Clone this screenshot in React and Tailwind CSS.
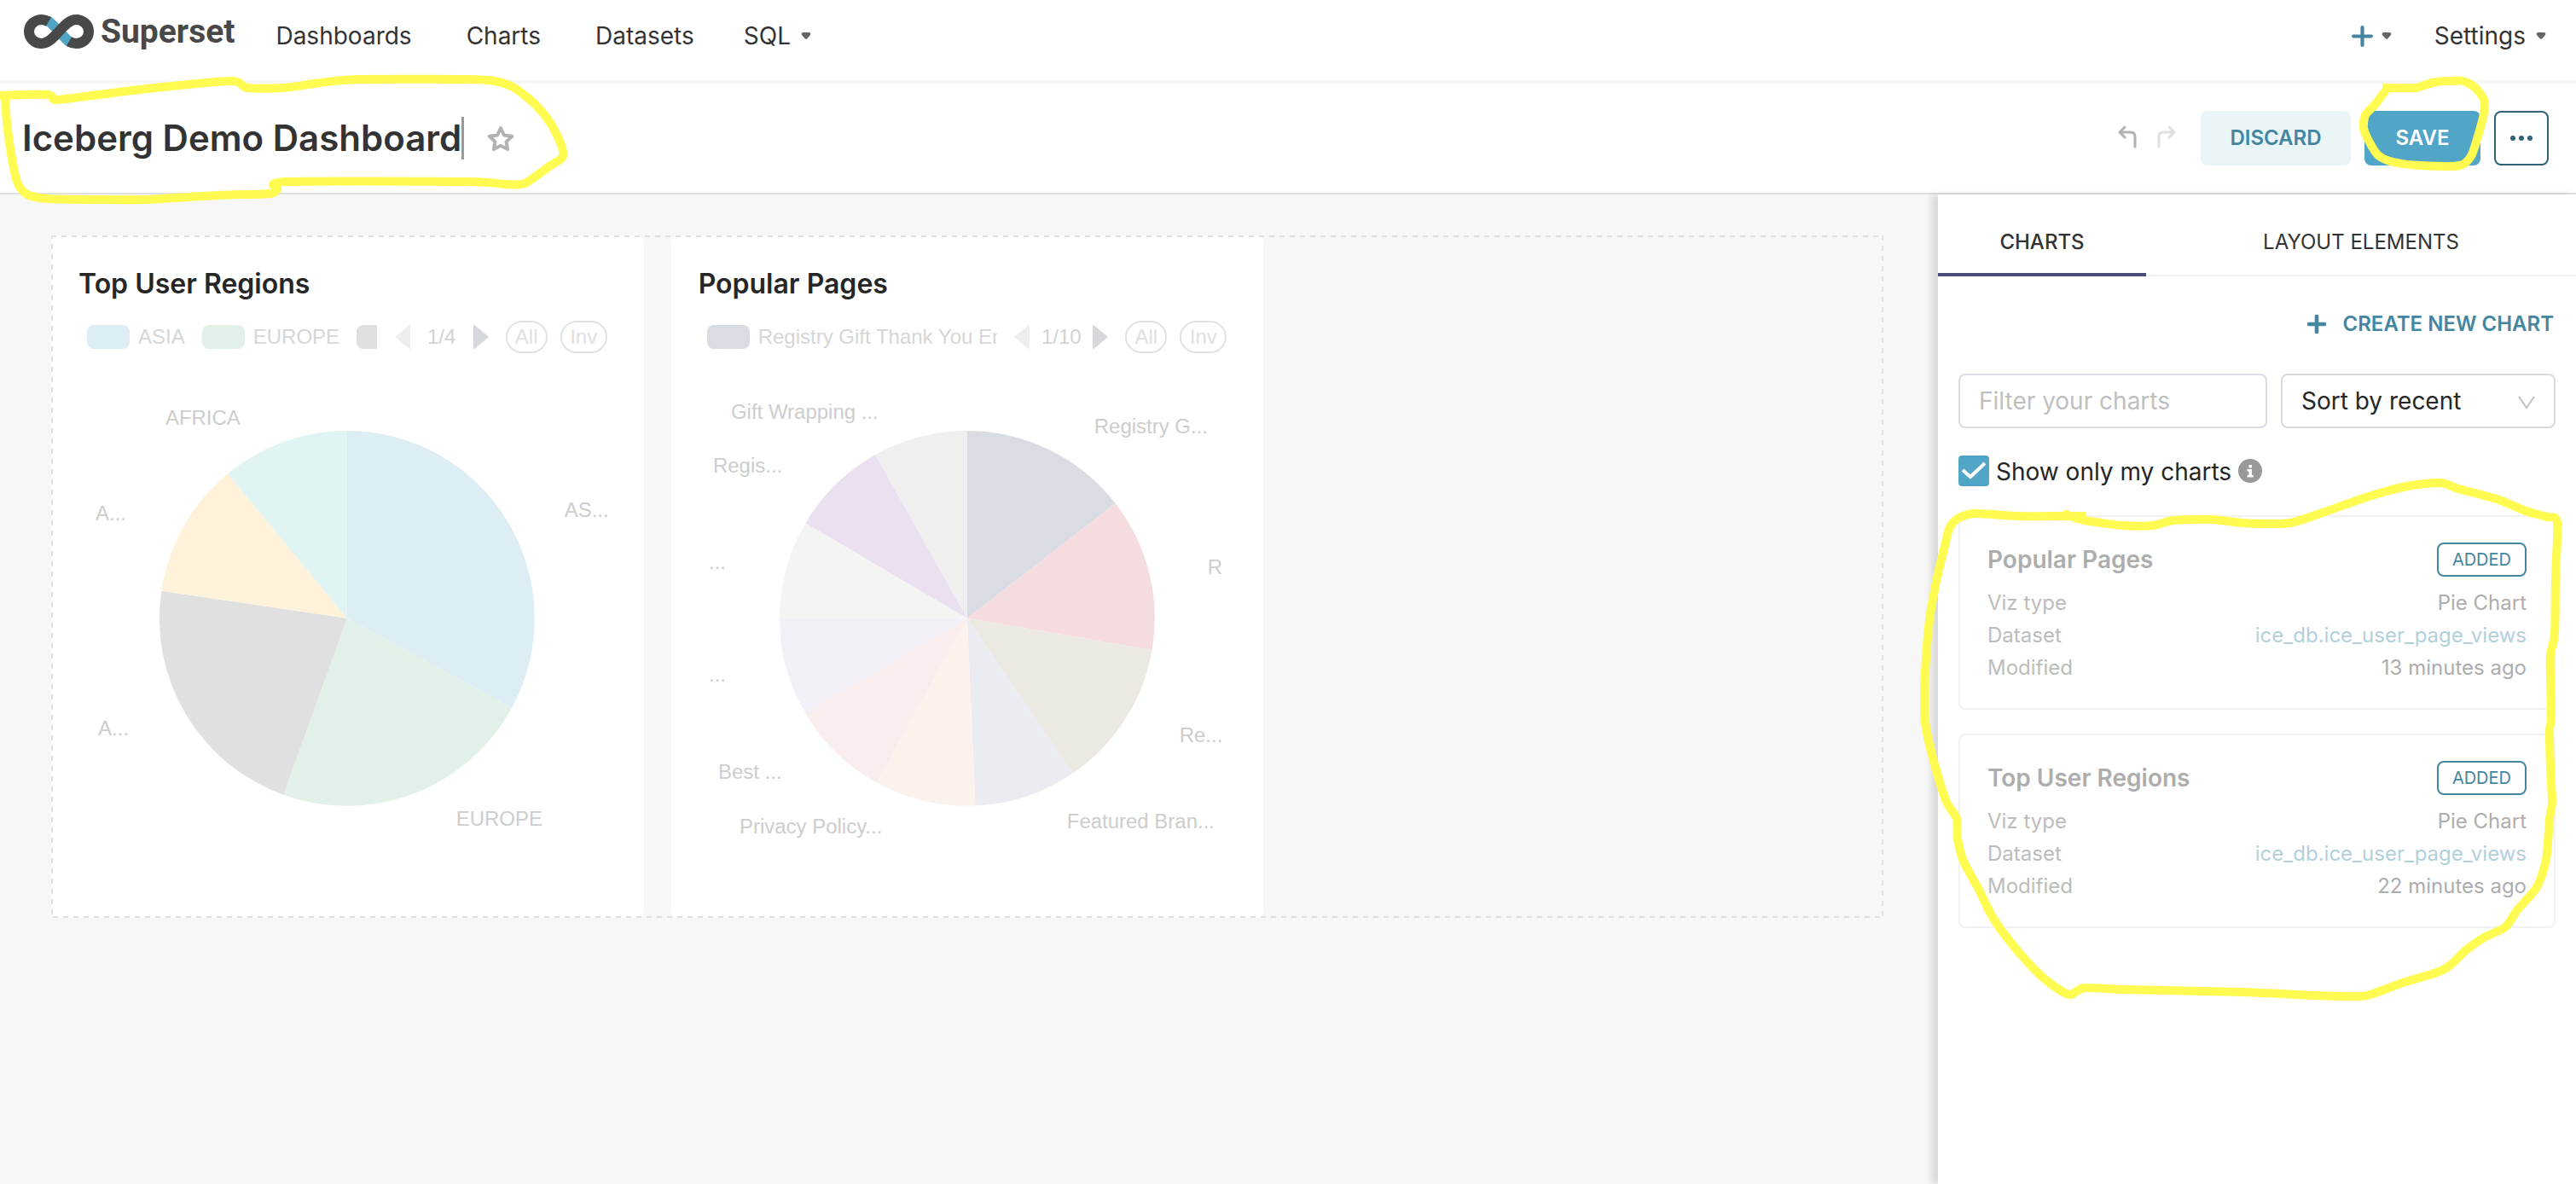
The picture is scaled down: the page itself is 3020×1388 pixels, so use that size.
import React from "react";

const YELLOW = "#FFFB50";

const smooth = (pts) =>
  pts.reduce((d, p, i) => {
    if (i === 0) return `M${p[0]} ${p[1]}`;
    const a = pts[Math.max(i - 2, 0)];
    const b = pts[i - 1];
    const n = pts[Math.min(i + 1, pts.length - 1)];
    const c1 = [b[0] + (p[0] - a[0]) / 8, b[1] + (p[1] - a[1]) / 8];
    const c2 = [p[0] - (n[0] - b[0]) / 8, p[1] - (n[1] - b[1]) / 8];
    return `${d}C${c1[0]} ${c1[1]} ${c2[0]} ${c2[1]} ${p[0]} ${p[1]}`;
  }, "");

const TITLE_LOOP = [
  [-4, 112], [56, 111], [66, 117], [115, 111], [191, 102], [272, 95], [290, 103], [332, 103], [376, 97], [418, 93],
  [548, 93], [580, 95], [603, 103], [628, 123], [647, 147], [659, 173], [659, 185], [644, 195], [615, 215], [593, 216],
  [548, 213], [335, 213], [325, 222], [316, 227], [255, 229], [169, 234], [115, 234], [57, 233], [32, 228], [20, 213],
  [13, 180], [8, 143], [6, 115],
];
const SAVE_LOOP = [
  [2793, 103], [2832, 103], [2851, 97], [2869, 95], [2888, 95], [2902, 103], [2912, 117], [2912, 133], [2904, 163],
  [2897, 183], [2884, 194], [2838, 194], [2806, 190], [2788, 182], [2777, 165], [2771, 150], [2773, 135], [2784, 123],
  [2797, 106],
];
const LIST_LOOP = [
  [2446, 605], [2419, 605], [2364, 605], [2315, 602], [2295, 608], [2285, 620], [2280, 640], [2271, 677], [2262, 727],
  [2257, 787], [2256, 827], [2257, 847], [2262, 873], [2272, 910], [2282, 940], [2294, 960], [2295, 983], [2302, 1010],
  [2320, 1043], [2337, 1077], [2364, 1113], [2394, 1145], [2417, 1162], [2428, 1166], [2444, 1158], [2489, 1160],
  [2628, 1163], [2713, 1167], [2767, 1168], [2782, 1165], [2817, 1152], [2857, 1140], [2872, 1132], [2892, 1113],
  [2914, 1098], [2937, 1087], [2951, 1067], [2974, 1040], [2985, 1007], [2989, 960], [2992, 940], [2990, 900],
  [2989, 857], [2991, 840], [2990, 793], [2990, 767], [2995, 743], [2996, 677], [2998, 612], [2986, 606], [2961, 599],
  [2927, 585], [2882, 573], [2867, 567], [2857, 566], [2822, 570], [2777, 582], [2723, 601], [2685, 613], [2653, 614],
  [2628, 613], [2593, 609], [2548, 610], [2524, 616], [2489, 616], [2444, 610], [2419, 602],
];

function Marker() {
  return (
    <svg className="pointer-events-none absolute top-0 left-0" width="3020" height="1388" fill="none" stroke={YELLOW} strokeWidth="10" strokeLinejoin="round" aria-hidden="true">
      <path d={smooth(TITLE_LOOP)} />
      <path d={smooth(SAVE_LOOP)} />
      <path d={smooth(LIST_LOOP)} />
    </svg>
  );
}

function Caret() {
  return (
    <svg width="12" height="8" viewBox="0 0 12 8" fill="#666" aria-hidden="true">
      <path d="M2 0h8q2.400 1.500.6 3.400L7.300 7.200q-1.300 1-2.600 0L1.400 3.400Q-.4 1.500 2 0z" />
    </svg>
  );
}

function Plus({ size, width }) {
  return (
    <svg width={size} height={size} viewBox="0 0 24 24" stroke="#44859F" strokeWidth={width} strokeLinecap="round" aria-hidden="true">
      <path d="M12 2v20M2 12h20" />
    </svg>
  );
}

function LogoMark() {
  return (
    <svg width="82" height="40" viewBox="0 0 82 40" aria-hidden="true">
      <g fill="none" strokeWidth="12">
        <path d="M27 6.500C36 12 46 27 55 33.500" stroke="#51A5C6" />
        <path d="M29 8.500C26.500 7 24 6 21 6C12.500 6 6 12 6 20S12.500 34 21 34C36 34 46 6 61 6C69.500 6 76 12 76 20S69.500 34 61 34C58 34 55.500 33 53 31.500" stroke="#484848" />
      </g>
    </svg>
  );
}

function NavBar() {
  return (
    <nav className="flex h-[98px] items-start justify-between border-b-4 border-[#f7f7f7] bg-white pr-[35px] pl-7 text-[28px] leading-[84px]">
      <div className="flex">
        <a href="#home" aria-label="Superset" className="mr-12 flex h-[74px] items-center gap-2 text-[39px] font-bold text-[#484848]">
          <LogoMark />
          <span className="font-['Roboto',sans-serif]">Superset</span>
        </a>
        <div className="flex gap-[64px]">
          <a href="#dashboards">Dashboards</a>
          <a href="#charts">Charts</a>
          <a href="#datasets">Datasets</a>
          <button type="button" className="-ml-[6px] flex items-center gap-3">SQL <Caret /></button>
        </div>
      </div>
      <div className="flex gap-[50px]">
        <button type="button" aria-label="Create" className="flex items-center gap-[10px]"><Plus size={25} width={4} /><Caret /></button>
        <button type="button" className="flex items-center gap-3">Settings <Caret /></button>
      </div>
    </nav>
  );
}

function Header() {
  return (
    <header className="flex h-[130px] items-center justify-between border-b-2 border-[#e0e0e0] bg-white pr-8 pl-[26px]">
      <div className="flex items-center">
        <h1 className="text-[42px] leading-[50px] font-semibold whitespace-nowrap">Iceberg Demo Dashboard</h1>
        <span className="h-[50px] w-[3px] bg-[#999]" />
        <button type="button" aria-label="Favorite" className="ml-[26px]">
          <svg width="34" height="32" viewBox="0 0 34 32" fill="none" stroke="#b2b2b2" strokeWidth="4" strokeLinejoin="round" aria-hidden="true">
            <path d="M17 4l4 8.500 9.300 1.200-6.800 6.400 1.700 9L17 24.700 8.800 29.100l1.700-9L3.700 13.700 13 12.500z" />
          </svg>
        </button>
      </div>
      <div className="flex items-center gap-4 text-[24px] font-semibold">
        <div className="mr-[13px] flex gap-6">
          <button type="button" aria-label="Undo">
            <svg width="22" height="30" viewBox="0 0 22 30" fill="none" stroke="#b2b2b2" strokeWidth="3" strokeLinecap="round" strokeLinejoin="round" aria-hidden="true">
              <path d="M8 2L2 8l6 6M2 8h13q5 0 5 5v12" />
            </svg>
          </button>
          <button type="button" aria-label="Redo">
            <svg width="22" height="30" viewBox="0 0 22 30" fill="none" stroke="#e0e0e0" strokeWidth="3" strokeLinecap="round" strokeLinejoin="round" aria-hidden="true">
              <path d="M14 2l6 6-6 6M20 8H7Q2 8 2 13v12" />
            </svg>
          </button>
        </div>
        <button type="button" className="h-16 w-44 rounded-lg bg-[#EAF5F8] text-[#44859F]">DISCARD</button>
        <button type="button" className="h-16 w-[136px] rounded-lg bg-[#51A5C6] text-white">SAVE</button>
        <button type="button" aria-label="More actions" className="flex size-16 items-center justify-center gap-1 rounded-lg border-2 border-[#2F637A]">
          <span className="size-[6px] rounded-full bg-[#2F637A]" />
          <span className="size-[6px] rounded-full bg-[#2F637A]" />
          <span className="size-[6px] rounded-full bg-[#2F637A]" />
        </button>
      </div>
    </header>
  );
}

const polar = (deg, r) => [
  r * Math.sin((deg * Math.PI) / 180),
  -r * Math.cos((deg * Math.PI) / 180),
];

function Pie({ slices, labels, title }) {
  return (
    <svg viewBox="0 0 695 650" className="mt-3 block w-full" role="img" aria-label={title}>
      <g transform="translate(347 299)">
        {slices.map(([from, to, color]) => {
          const [x1, y1] = polar(from, 220);
          const [x2, y2] = polar(to, 220);
          return <path key={from} fill={color} d={`M0 0L${x1} ${y1}A220 220 0 ${to - from > 180 ? 1 : 0} 1 ${x2} ${y2}z`} />;
        })}
      </g>
      <g fill="#cdcdcd" fontSize="24" fontFamily="Liberation Sans, Arial, sans-serif">
        {labels.map(([x, y, text]) => (
          <text key={`${x}-${y}`} x={x} y={y}>{text}</text>
        ))}
      </g>
    </svg>
  );
}

function ChartCard({ title, legend, page, slices, labels }) {
  return (
    <section className="flex h-[800px] flex-col overflow-hidden rounded-lg bg-white">
      <h2 className="px-8 pt-[37px] text-[32px] leading-[40px] font-semibold text-[#262626]">{title}</h2>
      <div className="mt-[23px] flex h-[38px] items-center pr-[43px] pl-[42px] font-['Liberation_Sans',Arial,sans-serif] text-[24px] text-[#d6d6d6]">
        <ul className="flex w-[340px] flex-none items-center gap-[20px] overflow-hidden whitespace-nowrap">
          {legend.map(([name, color]) => (
            <li key={color} className="flex flex-none items-center gap-[10px]">
              <span className="h-7 w-[50px] flex-none rounded-lg" style={{ backgroundColor: color }} />
              {name}
            </li>
          ))}
        </ul>
        <div className="ml-auto flex items-center">
          <button type="button" aria-label="Previous page">
            <svg width="18" height="30" viewBox="0 0 18 30" fill="#eee" aria-hidden="true"><path d="M18 0v30L0 15z" /></svg>
          </button>
          <span className="w-[74px] text-center text-[#d2d2d2]">{page}</span>
          <button type="button" aria-label="Next page">
            <svg width="18" height="30" viewBox="0 0 18 30" fill="#d5d9dd" aria-hidden="true"><path d="M0 0v30l18-15z" /></svg>
          </button>
          <button type="button" className="ml-5 h-[38px] w-[49px] rounded-full border-2 border-[#e2e2e2] leading-[32px] text-[#e0e0e0]">All</button>
          <button type="button" className="ml-[15px] h-[38px] w-[55px] rounded-full border-2 border-[#e2e2e2] leading-[32px] text-[#e0e0e0]">Inv</button>
        </div>
      </div>
      <Pie slices={slices} labels={labels} title={title} />
    </section>
  );
}

const CHARTS = [
  {
    title: "Top User Regions",
    legend: [["ASIA", "#DCEDF4"], ["EUROPE", "#E2F1E8"], ["", "#E0E0E0"]],
    page: "1/4",
    slices: [
      [0, 118.5, "#DCEDF4"], [118.5, 199.8, "#E2F1E8"], [199.8, 278.4, "#E0E0E0"],
      [278.4, 320.5, "#FEF3DA"], [320.5, 360, "#E0F4F3"],
    ],
    labels: [[134, 72, "AFRICA"], [602, 180, "AS..."], [52, 184, "A..."], [55, 436, "A..."], [475, 542, "EUROPE"]],
  },
  {
    title: "Popular Pages",
    legend: [["Registry Gift Thank You Email", "#D9DCE3"]],
    page: "1/10",
    slices: [
      [0, 52.2, "#D9DCE3"], [52.2, 99.7, "#F4DCDF"], [99.7, 145.8, "#ECE9E3"], [145.8, 177.5, "#EBECF1"],
      [177.5, 208.8, "#FCF2EC"], [208.8, 239.5, "#F9EDED"], [239.5, 270, "#F4F0F7"], [270, 300.5, "#F4F4F2"],
      [300.5, 330.7, "#EBE0F0"], [330.7, 360, "#EFEFEF"],
    ],
    labels: [
      [70, 65, "Gift Wrapping ..."], [49, 128, "Regis..."], [44, 241, "..."], [44, 373, "..."], [55, 487, "Best ..."],
      [80, 551, "Privacy Policy..."], [464, 545, "Featured Bran..."], [596, 444, "Re..."], [629, 247, "R"],
      [496, 82, "Registry G..."],
    ],
  },
];

function ChartItem({ title, modified }) {
  return (
    <article className="rounded-lg border-2 border-[#f2f2f2] px-8 pt-[30px] pb-[28px] text-[24px] leading-[38px] text-[#adadad]">
      <div className="flex h-10 items-center justify-between">
        <h3 className="text-[28px] font-semibold">{title}</h3>
        <span className="h-10 rounded-lg border-2 border-[#44859F] px-4 text-[20px] leading-[37px] text-[#44859F]">ADDED</span>
      </div>
      <dl className="mt-3">
        <div className="flex justify-between"><dt className="text-[#bcbcbc]">Viz type</dt><dd>Pie Chart</dd></div>
        <div className="flex justify-between">
          <dt className="text-[#bcbcbc]">Dataset</dt>
          <dd><a href="#dataset" className="text-[#b2d0dc]">ice_db.ice_user_page_views</a></dd>
        </div>
        <div className="flex justify-between"><dt className="text-[#bcbcbc]">Modified</dt><dd>{modified}</dd></div>
      </dl>
    </article>
  );
}

function Sidebar() {
  return (
    <aside className="w-[748px] flex-none bg-white shadow-[-8px_0_8px_rgba(0,0,0,0.12)]">
      <div role="tablist" className="flex border-b-2 border-[#f0f0f0] text-[24px] leading-[36px]">
        <button type="button" role="tab" aria-selected="true" className="-mb-[2px] h-24 w-[244px] border-b-4 border-[#484C7A] pt-6 pb-1 font-medium">CHARTS</button>
        <button type="button" role="tab" aria-selected="false" className="h-[94px] flex-1 pt-6 pb-[6px]">LAYOUT ELEMENTS</button>
      </div>
      <div className="px-6 pt-[38px]">
        <div className="flex justify-end">
          <button type="button" className="flex h-[36px] items-center gap-[20px] pr-[2px] text-[24px] font-semibold text-[#44859F]">
            <Plus size={22} width={5} />CREATE NEW CHART
          </button>
        </div>
        <div className="mt-10 flex gap-4 text-[28px]">
          <input type="text" aria-label="Filter your charts" placeholder="Filter your charts" className="h-16 min-w-0 flex-1 rounded-lg border-2 border-[#d9dce4] px-[22px] outline-none placeholder:text-[#bfbfbf]" />
          <div className="relative w-[322px]">
            <select aria-label="Sort" className="h-16 w-full appearance-none rounded-lg border-2 border-[#d9d9d9] bg-white px-[22px] text-[#262626]">
              <option>Sort by recent</option>
            </select>
            <svg className="pointer-events-none absolute top-[26px] right-[24px]" width="20" height="16" viewBox="0 0 20 16" fill="none" stroke="#bfbfbf" strokeWidth="2" aria-hidden="true">
              <path d="M1 1l9 13 9-13" />
            </svg>
          </div>
        </div>
        <div className="mt-8 flex h-9 items-center text-[28px]">
          <label className="flex items-center gap-2">
            <span className="relative block size-9">
              <input type="checkbox" defaultChecked className="block size-9 appearance-none rounded bg-[#51A5C6]" />
              <svg className="pointer-events-none absolute inset-0" width="36" height="36" viewBox="0 0 36 36" fill="none" stroke="#fff" strokeWidth="4" aria-hidden="true">
                <path d="M5 17l9 8L31 9" />
              </svg>
            </span>
            <span className="pt-[2px] text-[#262626]">Show only my charts</span>
          </label>
          <svg className="ml-2" width="28" height="28" viewBox="0 0 28 28" aria-hidden="true">
            <circle cx="14" cy="14" r="14" fill="#999" />
            <path d="M12.500 7h3.500v3.500h-3.500zM10.500 12h5.500v7h1.800v2.500h-7.300V19h1.900v-4.500h-1.900z" fill="#fff" />
          </svg>
        </div>
        <div className="mt-[34px] flex flex-col gap-7">
          <ChartItem title="Popular Pages" modified="13 minutes ago" />
          <ChartItem title="Top User Regions" modified="22 minutes ago" />
        </div>
      </div>
    </aside>
  );
}

export default function App() {
  return (
    <div className="relative flex min-h-screen flex-col overflow-hidden bg-[#f7f7f7] font-['Inter',sans-serif] text-[#333]">
      <NavBar />
      <Header />
      <div className="flex flex-1">
        <main className="min-w-0 flex-1 pt-[48px] pr-16 pl-[60px]">
          <div className="relative grid grid-cols-3 gap-8">
            {CHARTS.map((chart) => <ChartCard key={chart.title} {...chart} />)}
            <svg className="pointer-events-none absolute inset-0 h-full w-full" aria-hidden="true">
              <rect x="0" y="0" width="100%" height="100%" fill="none" stroke="#e0e0e0" strokeWidth="4" strokeDasharray="6 6" />
            </svg>
          </div>
        </main>
        <Sidebar />
      </div>
      <Marker />
    </div>
  );
}
